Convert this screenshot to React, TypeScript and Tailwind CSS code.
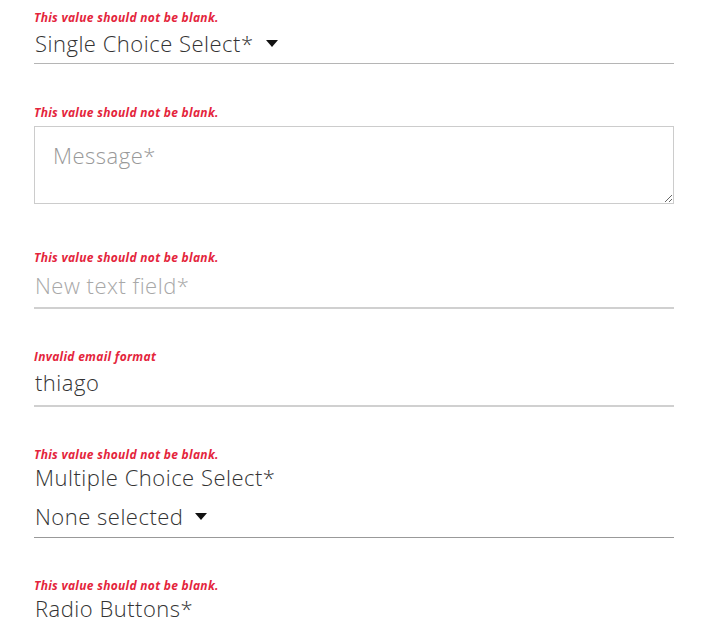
import React from "react";

function ErrorText({ children }: { children: React.ReactNode }) {
    return (
        <div className="text-[12px] leading-[14px] font-bold italic text-[#e4253c] tracking-[0.3px]">
            {children}
        </div>
    );
}

function Caret() {
    return (
        <svg width="12" height="7" viewBox="0 0 12 7" className="ml-[12px]">
            <path d="M0 0 L12 0 L6 7 Z" fill="#111" />
        </svg>
    );
}

export default function App() {
    return (
        <div
            className="bg-white w-[720px] h-[632px] overflow-hidden text-[#333]"
            style={{ fontFamily: '"Open Sans", "Liberation Sans", sans-serif' }}
        >
            <div className="ml-[34px] w-[640px] pt-[11px] flex flex-col">
                {/* single select */}
                <ErrorText>This value should not be blank.</ErrorText>
                <div className="flex items-center h-[39px] border-b border-[#b5b5b5] pl-[1px] pb-[1px]">
                    <span className="text-[22px] font-light tracking-[0.5px]">Single Choice Select*</span>
                    <Caret />
                </div>

                {/* message */}
                <div className="mt-[42px]">
                    <ErrorText>This value should not be blank.</ErrorText>
                </div>
                <textarea
                    placeholder="Message*"
                    className="mt-[6px] h-[78px] w-full border border-[#cccccc] px-[18px] pt-[12px] text-[22px] font-light tracking-[0.5px] placeholder:text-[#999] outline-none resize-y"
                />

                {/* new text field */}
                <div className="mt-[47px]">
                    <ErrorText>This value should not be blank.</ErrorText>
                </div>
                <div className="flex items-center h-[44px] border-b-2 border-[#d0d0d0] pl-[1px] pb-[2px]">
                    <span className="text-[22px] font-light tracking-[0.5px] text-[#a8a8a8]">New text field*</span>
                </div>

                {/* email */}
                <div className="mt-[41px]">
                    <ErrorText>Invalid email format</ErrorText>
                </div>
                <div className="flex items-center h-[43px] border-b-2 border-[#d0d0d0] pl-[1px] pb-[4px]">
                    <span className="text-[22px] font-light tracking-[0.5px]">thiago</span>
                </div>

                {/* multiple select */}
                <div className="mt-[41px]">
                    <ErrorText>This value should not be blank.</ErrorText>
                </div>
                <div className="text-[22px] font-light tracking-[0.5px] leading-[31px] pl-[1px]">
                    Multiple Choice Select*
                </div>
                <div className="flex items-center h-[45px] border-b border-[#999] pl-[1px] pt-[2px]">
                    <span className="text-[22px] font-light tracking-[0.5px]">None selected</span>
                    <Caret />
                </div>

                {/* radio */}
                <div className="mt-[41px]">
                    <ErrorText>This value should not be blank.</ErrorText>
                </div>
                <div className="text-[22px] font-light tracking-[0.5px] leading-[30px] pl-[1px]">Radio Buttons*</div>
            </div>
        </div>
    );
}
